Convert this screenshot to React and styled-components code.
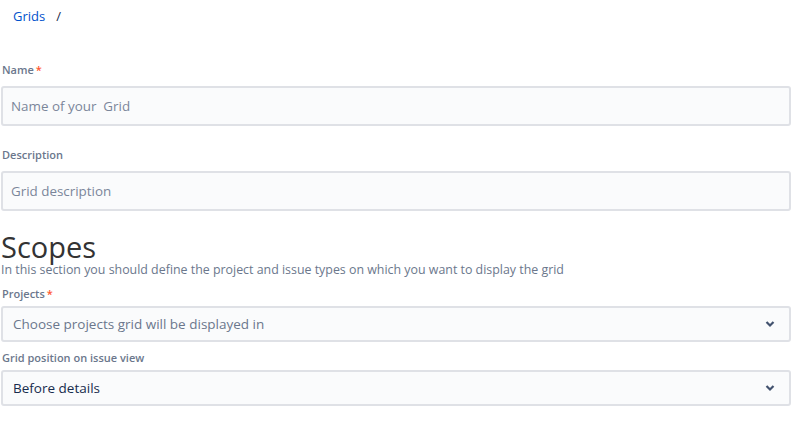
import React from "react";
import styled, { createGlobalStyle } from "styled-components";

const Global = createGlobalStyle`
  html, body { margin: 0; padding: 0; background: #fff; }
  body { font-family: "Open Sans", "Noto Sans", sans-serif; color: #172B4D; }
  * { box-sizing: border-box; }
`;

const Page = styled.div`
  width: 806px;
  padding: 0 15px 0 1px;
`;

const Breadcrumbs = styled.nav`
  display: flex;
  align-items: center;
  height: 31px;
  padding-left: 12px;
  font-size: 13px;
`;

const Crumb = styled.a`
  color: #0052CC;
  text-decoration: none;
`;

const Sep = styled.span`
  color: #172B4D;
  margin-left: 11px;
`;

const Form = styled.form`
  display: flex;
  flex-direction: column;
`;

const Label = styled.label`
  display: block;
  font-size: 11px;
  font-weight: 600;
  color: #6B778C;
  line-height: 16px;
  margin: ${(p) => p.$mt || 0}px 0 ${(p) => p.$mb ?? 8}px 1px;
`;

const Req = styled.span`
  color: #FF5630;
  margin-left: 2px;
`;

const Input = styled.input`
  width: 100%;
  height: 40px;
  border: 2px solid #DFE1E6;
  border-radius: 3px;
  background: #FAFBFC;
  padding: 0 8px;
  font-family: inherit;
  font-size: 13.4px;
  color: #172B4D;
  outline: none;
  &::placeholder { color: #7A869A; }
`;

const Heading = styled.h2`
  margin: 21px 0 0 0;
  font-size: 29px;
  font-weight: 400;
  line-height: 30px;
  color: #333333;
`;

const Sub = styled.p`
  margin: 0;
  font-size: 12.4px;
  line-height: 16px;
  color: #6B778C;
`;

const Select = styled.div`
  display: flex;
  align-items: center;
  justify-content: space-between;
  height: 36px;
  border: 2px solid #DFE1E6;
  border-radius: 3px;
  background: #FAFBFC;
  padding: 0 14px 0 10px;
  font-size: 13.5px;
  color: ${(p) => (p.$placeholder ? "#6B778C" : "#172B4D")};
`;

const Chevron = () => (
  <svg width="10" height="8" viewBox="0 0 10 8">
    <path d="M1.5 2 L5 5.5 L8.5 2" fill="none" stroke="#42526E" strokeWidth="2.2" />
  </svg>
);

export default function App() {
  return (
    <Page>
      <Global />
      <Breadcrumbs>
        <Crumb href="#">Grids</Crumb>
        <Sep>/</Sep>
      </Breadcrumbs>
      <Form>
        <Label $mt={31}>
          Name<Req>*</Req>
        </Label>
        <Input placeholder="Name of your  Grid" />
        <Label $mt={21}>Description</Label>
        <Input placeholder="Grid description" />
        <Heading>Scopes</Heading>
        <Sub>In this section you should define the project and issue types on which you want to display the grid</Sub>
        <Label $mt={8} $mb={4}>
          Projects<Req>*</Req>
        </Label>
        <Select $placeholder>
          Choose projects grid will be displayed in
          <Chevron />
        </Select>
        <Label $mt={8} $mb={4}>Grid position on issue view</Label>
        <Select>
          Before details
          <Chevron />
        </Select>
      </Form>
    </Page>
  );
}
